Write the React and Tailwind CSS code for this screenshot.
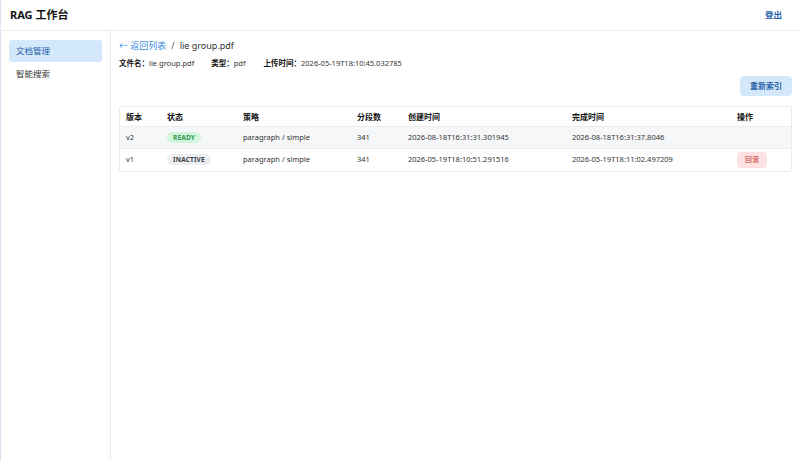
const versions = [
  {
    v: 'v2',
    status: 'READY',
    strategy: 'paragraph / simple',
    chunks: 341,
    created: '2026-08-18T16:31:31.301945',
    finished: '2026-08-18T16:31:37.8046',
    active: true,
  },
  {
    v: 'v1',
    status: 'INACTIVE',
    strategy: 'paragraph / simple',
    chunks: 341,
    created: '2026-05-19T18:10:51.291516',
    finished: '2026-05-19T18:11:02.497209',
    active: false,
  },
]

function StatusBadge({ status }) {
  if (status === 'READY') {
    return (
      <span className="rounded-full bg-[#d3f5dc] px-[6px] py-[1px] text-[6.5px] font-bold tracking-wide text-[#2f9a4f]">
        READY
      </span>
    )
  }
  return (
    <span className="rounded-full bg-[#eceef1] px-[6px] py-[1px] text-[6.5px] font-bold tracking-wide text-[#3a3f47]">
      {status}
    </span>
  )
}

export default function App() {
  return (
    <div
      className="flex h-[461px] w-[800px] flex-col border-l border-[#dbe5f4] bg-white text-[#222]"
      style={{ fontFamily: '"Noto Sans", "Noto Sans CJK SC", sans-serif' }}
    >
      <header className="flex h-[31px] shrink-0 items-center justify-between border-b border-[#ececec] pl-[9px] pr-[18px]">
        <span className="text-[11px] font-bold text-[#111]">RAG 工作台</span>
        <button className="text-[8.5px] font-semibold text-[#1f5fa8]">登出</button>
      </header>

      <div className="flex min-h-0 flex-1">
        <aside className="w-[110px] shrink-0 border-r border-[#ececec] px-[8px] pt-[9px]">
          <div className="flex h-[22px] items-center rounded-[3px] bg-[#d4e8fc] px-[7px] text-[8.5px] text-[#1f5fa8]">
            文档管理
          </div>
          <div className="mt-[1px] flex h-[22px] items-center px-[7px] text-[8.5px] text-[#333]">
            智能搜索
          </div>
        </aside>

        <main className="flex-1 pl-[8px] pr-[8px] pt-[8px]">
          <div className="flex items-center gap-[5px] text-[9px]">
            <span className="text-[#3d8ee0]">← 返回列表</span>
            <span className="text-[#555]">/</span>
            <span className="text-[#333]">lie group.pdf</span>
          </div>

          <div className="mt-[5px] flex items-center text-[7.5px] text-[#333]">
            <span>
              <b className="font-bold text-[#111]">文件名：</b>lie group.pdf
            </span>
            <span className="ml-[17px]">
              <b className="font-bold text-[#111]">类型：</b>pdf
            </span>
            <span className="ml-[18px]">
              <b className="font-bold text-[#111]">上传时间：</b>2026-05-19T18:10:45.032785
            </span>
          </div>

          <div className="mt-[7px] flex justify-end">
            <button className="h-[20px] w-[52px] rounded-[4px] bg-[#d4e8fc] text-[8px] font-semibold text-[#1f5fa8]">
              重新索引
            </button>
          </div>

          <div className="mt-[10px] rounded-[2px] border border-[#ececec]">
            <table className="w-full table-fixed border-collapse text-left text-[7.5px] text-[#333]">
              <colgroup>
                <col className="w-[41px]" />
                <col className="w-[76px]" />
                <col className="w-[114px]" />
                <col className="w-[51px]" />
                <col className="w-[164px]" />
                <col className="w-[165px]" />
                <col />
              </colgroup>
              <thead>
                <tr className="h-[20px] border-b border-[#ececec] text-[8px] text-[#111]">
                  <th className="pl-[6px] font-bold">版本</th>
                  <th className="pl-[6px] font-bold">状态</th>
                  <th className="pl-[6px] font-bold">策略</th>
                  <th className="pl-[6px] font-bold">分段数</th>
                  <th className="pl-[6px] font-bold">创建时间</th>
                  <th className="pl-[6px] font-bold">完成时间</th>
                  <th className="pl-[6px] font-bold">操作</th>
                </tr>
              </thead>
              <tbody>
                {versions.map((r) => (
                  <tr
                    key={r.v}
                    className={`h-[22px] border-b border-[#ececec] last:border-b-0 ${r.active ? 'bg-[#f6f7f9]' : 'bg-white'}`}
                  >
                    <td className="pl-[6px]">{r.v}</td>
                    <td className="pl-[6px]">
                      <StatusBadge status={r.status} />
                    </td>
                    <td className="pl-[6px]">{r.strategy}</td>
                    <td className="pl-[6px]">{r.chunks}</td>
                    <td className="pl-[6px]">{r.created}</td>
                    <td className="pl-[6px]">{r.finished}</td>
                    <td className="pl-[6px]">
                      {!r.active && (
                        <button className="h-[16px] w-[30px] rounded-[4px] bg-[#fde0e2] text-[7px] text-[#c0392b]">
                          回滚
                        </button>
                      )}
                    </td>
                  </tr>
                ))}
              </tbody>
            </table>
          </div>
        </main>
      </div>
    </div>
  )
}
